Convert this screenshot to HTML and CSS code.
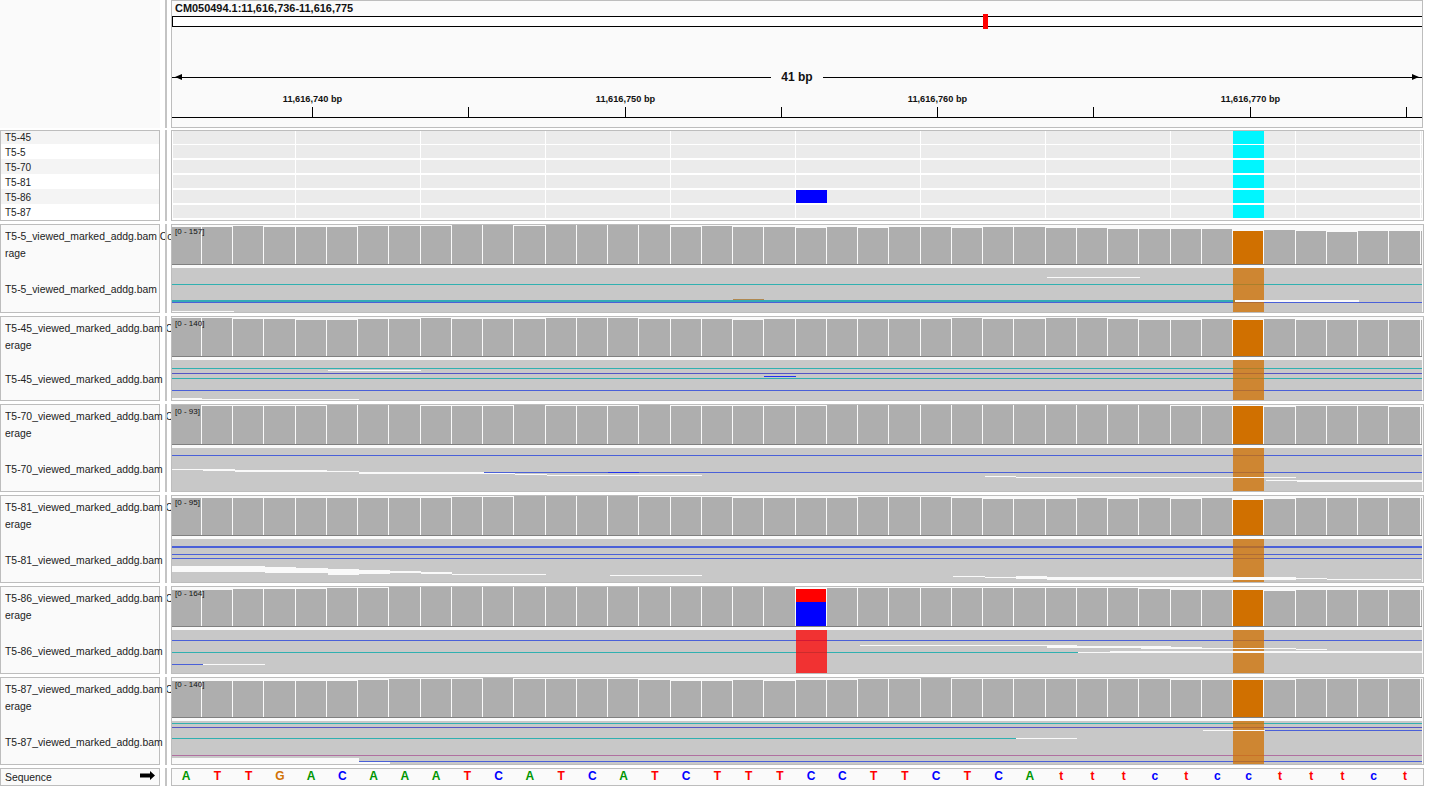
FILE: index.html
```html
<!DOCTYPE html>
<html lang="en">
<head>
    <meta charset="UTF-8">
    <title>IGV - CM050494.1:11,616,736-11,616,775</title>
    <link rel="stylesheet" href="styles.css">
</head>
<body>
    <div class="page">
        <!-- Header: locus, ideogram, span and ruler -->
        <div class="row header-row">
            <div class="names names-plain"></div>
            <div class="divider"></div>
            <div class="panel header-panel">
                <div class="locus">CM050494.1:11,616,736-11,616,775</div>
                <div class="ideogram"><span class="marker"></span></div>
                <div class="span">
                    <div class="span-line span-left"></div>
                    <div class="span-label">41 bp</div>
                    <div class="span-line span-right"></div>
                </div>
                <svg class="ruler" id="ruler" width="1250" height="25"></svg>
            </div>
        </div>

        <!-- Variant sample heatmap -->
        <div class="row heat-row">
            <div class="names samples">
                <div class="sample">T5-45</div>
                <div class="sample">T5-5</div>
                <div class="sample">T5-70</div>
                <div class="sample">T5-81</div>
                <div class="sample">T5-86</div>
                <div class="sample">T5-87</div>
            </div>
            <div class="divider"></div>
            <div class="panel heat-panel">
                <svg id="heat" width="1251" height="89"></svg>
            </div>
        </div>

        <!-- BAM tracks -->
        <div class="row track" data-track="t5">
            <div class="names">
                <div class="cov-name"><span class="clip">T5-5_viewed_marked_addg.bam Co</span><span>rage</span></div>
                <div class="reads-name">T5-5_viewed_marked_addg.bam</div>
            </div>
            <div class="divider"></div>
            <div class="panel track-panel">
                <div class="coverage"><span class="range">[0 - 157]</span><svg class="cov" width="1251" height="40"></svg></div>
                <svg class="reads" width="1251" height="44"></svg>
            </div>
        </div>

        <div class="row track" data-track="t45">
            <div class="names">
                <div class="cov-name"><span class="clip">T5-45_viewed_marked_addg.bam C</span><span>erage</span></div>
                <div class="reads-name">T5-45_viewed_marked_addg.bam</div>
            </div>
            <div class="divider"></div>
            <div class="panel track-panel">
                <div class="coverage"><span class="range">[0 - 140]</span><svg class="cov" width="1251" height="40"></svg></div>
                <svg class="reads" width="1251" height="40"></svg>
            </div>
        </div>

        <div class="row track" data-track="t70">
            <div class="names">
                <div class="cov-name"><span class="clip">T5-70_viewed_marked_addg.bam C</span><span>erage</span></div>
                <div class="reads-name">T5-70_viewed_marked_addg.bam</div>
            </div>
            <div class="divider"></div>
            <div class="panel track-panel">
                <div class="coverage"><span class="range">[0 - 93]</span><svg class="cov" width="1251" height="40"></svg></div>
                <svg class="reads" width="1251" height="43"></svg>
            </div>
        </div>

        <div class="row track" data-track="t81">
            <div class="names">
                <div class="cov-name"><span class="clip">T5-81_viewed_marked_addg.bam C</span><span>erage</span></div>
                <div class="reads-name">T5-81_viewed_marked_addg.bam</div>
            </div>
            <div class="divider"></div>
            <div class="panel track-panel">
                <div class="coverage"><span class="range">[0 - 95]</span><svg class="cov" width="1251" height="40"></svg></div>
                <svg class="reads" width="1251" height="43"></svg>
            </div>
        </div>

        <div class="row track" data-track="t86">
            <div class="names">
                <div class="cov-name"><span class="clip">T5-86_viewed_marked_addg.bam C</span><span>erage</span></div>
                <div class="reads-name">T5-86_viewed_marked_addg.bam</div>
            </div>
            <div class="divider"></div>
            <div class="panel track-panel">
                <div class="coverage"><span class="range">[0 - 164]</span><svg class="cov" width="1251" height="40"></svg></div>
                <svg class="reads" width="1251" height="43"></svg>
            </div>
        </div>

        <div class="row track" data-track="t87">
            <div class="names">
                <div class="cov-name"><span class="clip">T5-87_viewed_marked_addg.bam C</span><span>erage</span></div>
                <div class="reads-name">T5-87_viewed_marked_addg.bam</div>
            </div>
            <div class="divider"></div>
            <div class="panel track-panel">
                <div class="coverage"><span class="range">[0 - 140]</span><svg class="cov" width="1251" height="40"></svg></div>
                <svg class="reads" width="1251" height="43"></svg>
            </div>
        </div>

        <!-- Sequence -->
        <div class="row seq-row">
            <div class="names seq-name">
                <span>Sequence</span>
                <svg width="15" height="9" viewBox="0 0 15 9"><path d="M0 2.500h10V0l5 4.500-5 4.500V6.500H0z"/></svg>
            </div>
            <div class="divider"></div>
            <div class="panel seq-panel"><div class="bases" id="bases"></div></div>
        </div>
    </div>
    <script src="script.js"></script>
</body>
</html>
```

FILE: styles.css
```css
body {
    margin: 0;
    background: #fff;
    font-family: "Liberation Sans", Arial, sans-serif;
    color: #222;
}
svg {
    display: block;
    shape-rendering: crispEdges;
}
.page {
    display: flex;
    flex-direction: column;
    gap: 3px;
}
.row {
    display: flex;
}
.names {
    width: 160px;
    box-sizing: border-box;
    border: 1px solid #bdbdbd;
    background: #fafafa;
    font-size: 10.4px;
    flex: none;
}
.names-plain {
    border: none;
}
.divider {
    width: 2px;
    margin: 0 4px 0 5px;
    background: #c4c4c4;
    flex: none;
}
.panel {
    width: 1253px;
    box-sizing: border-box;
    border: 1px solid #bdbdbd;
    background: #fafafa;
    flex: none;
}

/* header */
.header-row {
    height: 128px;
    margin-bottom: -1px;
}
.header-panel {
    width: 1252px;
}
.locus {
    height: 15px;
    padding-left: 3px;
    font-size: 10.95px;
    font-weight: bold;
    line-height: 14px;
    color: #111;
}
.ideogram {
    position: relative;
    height: 11px;
    box-sizing: border-box;
    border: 1px solid #000;
    border-right: none;
    background: #fff;
}
.marker {
    position: absolute;
    left: 810px;
    top: -3px;
    width: 5px;
    height: 15px;
    background: #f00;
}
.span {
    display: flex;
    align-items: center;
    height: 15px;
    margin-top: 43px;
}
.span-line {
    position: relative;
    flex: 1;
    height: 1px;
    background: #000;
}
.span-left::before,
.span-right::after {
    content: "";
    position: absolute;
    top: -3px;
    border-top: 3.5px solid transparent;
    border-bottom: 3.5px solid transparent;
}
.span-left::before {
    left: 3px;
    border-right: 7px solid #000;
}
.span-right::after {
    right: 3px;
    border-left: 7px solid #000;
}
.span-label {
    width: 52px;
    font-size: 12px;
    font-weight: bold;
    line-height: 15px;
    text-align: center;
    color: #111;
}
.ruler {
    margin-top: 8px;
}
.ruler text {
    font-size: 9.2px;
    font-weight: bold;
    fill: #111;
    text-anchor: middle;
}

/* sample list */
.heat-row {
    height: 91px;
}
.samples {
    background: #fff;
    font-size: 10px;
}
.sample {
    height: 15px;
    padding-left: 4px;
    line-height: 17px;
}
.sample:nth-child(odd) {
    background: #f4f4f4;
}
.sample:first-child {
    height: 13px;
    line-height: 13px;
}
.heat-panel {
    background: #fff;
}

/* tracks */
.track {
    height: 88px;
}
.track[data-track="t5"] {
    height: 89px;
}
.track[data-track="t45"] {
    height: 85px;
}
.track .names {
    display: flex;
    flex-direction: column;
}
.cov-name {
    height: 40px;
    display: flex;
    flex-direction: column;
    justify-content: center;
    padding-left: 4px;
    line-height: 17px;
    flex: none;
}
.clip {
    display: block;
    width: 167px;
    overflow: hidden;
    white-space: nowrap;
}
.reads-name {
    flex: 1;
    display: flex;
    align-items: center;
    margin-top: 2px;
    padding-left: 4px;
    white-space: nowrap;
}
.track-panel {
    display: flex;
    flex-direction: column;
}
.coverage {
    position: relative;
    height: 40px;
    margin-bottom: 3px;
}
.range {
    position: absolute;
    left: 3px;
    top: 1px;
    font-size: 8px;
    line-height: 11px;
    white-space: nowrap;
    color: #111;
}

/* sequence */
.seq-row {
    height: 18px;
}
.seq-name {
    display: flex;
    align-items: center;
    justify-content: space-between;
    padding: 0 4px;
}
.seq-name svg {
    margin-top: -3px;
    shape-rendering: auto;
}
.bases {
    display: grid;
    grid-template-columns: repeat(40, 31.25px);
    margin-left: -1.500px;
    font-size: 12px;
    font-weight: bold;
    line-height: 14px;
    text-align: center;
}
.base-a { color: #009600; }
.base-t { color: #f00; }
.base-g { color: #d17105; }
.base-c { color: #00f; }
```

FILE: script.js
```js
// Drawing of the IGV canvases. Everything is in page pixels, the panels start at x = 172.
const NS = 'http://www.w3.org/2000/svg';
const LEFT = 172;
const RIGHT = 1422;
const TEAL = '#30b0b0';
const BLUE = '#4a60d8';
const PURPLE = '#5555c5';
const PINK = '#b070a0';
const BRIGHT = '#2233ee';
const ORANGE = '#d07000';
const RED = '#ff0000';

function rect(svg, x, y, w, h, fill, opacity) {
    const r = document.createElementNS(NS, 'rect');
    r.setAttribute('x', x);
    r.setAttribute('y', y);
    r.setAttribute('width', w);
    r.setAttribute('height', h);
    r.setAttribute('fill', fill);
    if (opacity) r.setAttribute('fill-opacity', opacity);
    svg.appendChild(r);
}

// x of the white line in front of base k
function lineX(k) {
    return Math.floor(170 + 31.25 * k);
}

// tops: px below the top of the coverage strip, one per base
// lines: [x1, x2, y, h, colour], white: same without colour, drawn over the mismatch column
const tracks = {
    t5: {
        top: 268,
        tops: [2,2,1,2,2,2,1,1,1,0,0,1,0,0,0,0,2,1,2,2, 3,2,3,2,2,3,2,2,3,3,4,4,4,4,6,5,6,7,6,6,6],
        lines: [
            [LEFT, RIGHT, 284, 1, TEAL],
            [LEFT, 1235, 300, 2, '#35aab5'],
            [LEFT, RIGHT, 302, 1, BLUE],
            [733, 764, 299, 1, '#b08850']
        ],
        white: [
            [1047, 1140, 277, 1],
            [LEFT, 234, 311, 1],
            [1235, 1359, 300, 2]
        ],
        column: ORANGE
    },
    t45: {
        top: 360,
        tops: [1,1,2,2,3,3,2,2,1,2,2,2,1,1,1,2,2,2,3,2, 2,2,2,2,2,1,2,2,1,1,2,3,3,2,3,2,3,3,3,3,3],
        lines: [
            [LEFT, RIGHT, 368, 1, TEAL],
            [LEFT, RIGHT, 373, 1, PURPLE],
            [LEFT, RIGHT, 378, 1, TEAL],
            [LEFT, RIGHT, 390, 1, BLUE],
            [764, 796, 376, 1, BRIGHT]
        ],
        white: [
            [328, 421, 370, 1],
            [LEFT, 202, 398, 1],
            [LEFT, 359, 399, 1]
        ],
        column: ORANGE
    },
    t70: {
        top: 448,
        tops: [0,1,1,1,1,0,0,0,1,1,1,0,1,1,1,0,1,1,1,1, 1,0,0,0,0,0,0,0,0,0,0,0,1,1,1,2,1,1,1,2,2],
        lines: [
            [LEFT, RIGHT, 455, 1, BLUE],
            [484, RIGHT, 472, 1, BLUE],
            [608, 639, 472, 1, BRIGHT]
        ],
        white: [
            [LEFT, 203, 469, 1], [203, 235, 469, 2], [235, 327, 470, 2], [327, 359, 471, 1],
            [359, 484, 472, 2], [484, 515, 473, 1], [515, 547, 474, 1], [547, 702, 475, 1],
            [985, 1016, 476, 1], [1016, 1296, 477, 1], [1266, 1297, 480, 1], [1297, RIGHT, 480, 2]
        ],
        column: ORANGE
    },
    t81: {
        top: 539,
        tops: [2,2,2,2,2,2,2,2,2,1,1,0,0,0,0,1,1,1,2,2, 2,2,1,1,1,2,3,3,3,2,3,2,3,2,4,3,2,2,2,2,2],
        lines: [
            [LEFT, RIGHT, 546, 2, BLUE],
            [LEFT, RIGHT, 554, 1, BLUE],
            [LEFT, RIGHT, 558, 1, BLUE]
        ],
        white: [
            [LEFT, 265, 566, 6], [265, 296, 567, 6], [296, 328, 568, 5], [328, 359, 569, 6],
            [359, 390, 570, 4], [390, 421, 571, 2], [421, 452, 572, 2], [452, 546, 574, 1],
            [610, 702, 575, 1], [953, 985, 576, 1], [985, 1016, 577, 1], [1016, 1047, 576, 3],
            [1047, 1296, 577, 3], [1296, 1327, 578, 1], [1327, 1421, 579, 1]
        ],
        column: ORANGE
    },
    t86: {
        top: 630,
        tops: [3,3,2,2,2,1,1,0,0,0,0,0,0,0,0,0,0,0,0,0, 2,1,1,1,1,1,1,1,1,1,1,2,3,3,3,4,3,3,3,3,3],
        lines: [
            [LEFT, RIGHT, 640, 1, BLUE],
            [LEFT, 1078, 652, 1, TEAL],
            [LEFT, 203, 664, 1, BLUE]
        ],
        white: [
            [203, 265, 664, 1], [860, 1047, 645, 1], [1047, 1077, 645, 3], [1077, 1171, 646, 2],
            [1141, 1172, 648, 1], [1171, 1202, 647, 2], [1202, 1296, 648, 1], [1296, 1327, 649, 1],
            [1078, 1110, 652, 1], [1110, RIGHT, 651, 2]
        ],
        column: ORANGE,
        // the C/T mismatch at base 20
        snp: true
    },
    t87: {
        top: 721,
        tops: [3,3,3,3,3,3,2,1,1,1,0,1,1,1,1,2,3,3,2,3, 2,2,1,1,0,1,1,1,1,1,1,1,2,2,2,2,1,1,1,1,1],
        lines: [
            [LEFT, RIGHT, 723, 1, TEAL],
            [LEFT, RIGHT, 727, 1, PURPLE],
            [LEFT, 1016, 738, 1, TEAL],
            [1265, RIGHT, 730, 1, BLUE],
            [LEFT, RIGHT, 755, 1, PINK],
            [359, RIGHT, 761, 1, BLUE]
        ],
        white: [
            [1016, 1077, 738, 1],
            [1203, 1265, 730, 1],
            [LEFT, 359, 758, 6],
            [359, 390, 762, 2]
        ],
        column: ORANGE
    }
};

function drawCoverage(svg, track) {
    track.tops.forEach(function (top, k) {
        const x1 = Math.max(lineX(k) + 1, LEFT);
        const x2 = k === 40 ? RIGHT : lineX(k + 1);
        const fill = k === 34 ? ORANGE : '#aeaeae';
        rect(svg, x1 - LEFT, top, x2 - x1, 39 - top, fill);
    });
    if (track.snp) {
        rect(svg, 796 - LEFT, 2, 30, 13, RED);
        rect(svg, 796 - LEFT, 15, 30, 24, '#0000ff');
    }
    rect(svg, 0, 39, RIGHT - LEFT, 1, '#808080');
}

function drawReads(svg, track) {
    const height = svg.getAttribute('height');
    rect(svg, 0, 0, RIGHT - LEFT, height, '#c8c8c8');
    track.lines.forEach(function (l) {
        rect(svg, l[0] - LEFT, l[2] - track.top, l[1] - l[0], l[3], l[4]);
    });
    rect(svg, 1233 - LEFT, 0, 31, height, track.column, 0.75);
    if (track.snp) rect(svg, 796 - LEFT, 0, 31, height, RED, 0.75);
    track.white.forEach(function (l) {
        rect(svg, l[0] - LEFT, l[2] - track.top, l[1] - l[0], l[3], '#fafafa');
    });
}

document.querySelectorAll('.track').forEach(function (row) {
    const track = tracks[row.dataset.track];
    drawCoverage(row.querySelector('.cov'), track);
    drawReads(row.querySelector('.reads'), track);
});

// heatmap
const heat = document.getElementById('heat');
const heatRows = [[0, 13], [14, 13], [29, 13], [44, 13], [59, 13], [74, 13]];
heatRows.forEach(function (r, i) {
    rect(heat, 1, r[0], 1249, r[1], '#ebebeb');
    if (i === 4) rect(heat, 796 - LEFT, r[0], 31, r[1], '#0000ff');
});
for (let x = 295; x <= 1420; x += 125) {
    rect(heat, x - LEFT, 0, 1, 87, '#fff');
}
// the base column stays on top of the white lines
heatRows.forEach(function (r) {
    rect(heat, 1233 - LEFT, r[0], 31, r[1], '#00f6ff');
});

// ruler
const ruler = document.getElementById('ruler');
for (let i = 0; i < 8; i++) {
    const x = Math.round(312 + 156.25 * i) - LEFT;
    rect(ruler, x, 14, 1, 10, '#000');
    if (i % 2 === 0) {
        const t = document.createElementNS(NS, 'text');
        t.setAttribute('x', x + 0.5);
        t.setAttribute('y', 9);
        t.textContent = '11,616,7' + (40 + i * 5) + ' bp';
        ruler.appendChild(t);
    }
}
rect(ruler, 0, 24, 1250, 1, '#000');

// sequence
const bases = document.getElementById('bases');
'ATTGACAAATCATCATCTTTCCTTCTCAtttctcctttct'.split('').forEach(function (b) {
    const s = document.createElement('span');
    s.className = 'base-' + b.toLowerCase();
    s.textContent = b;
    bases.appendChild(s);
});
```
